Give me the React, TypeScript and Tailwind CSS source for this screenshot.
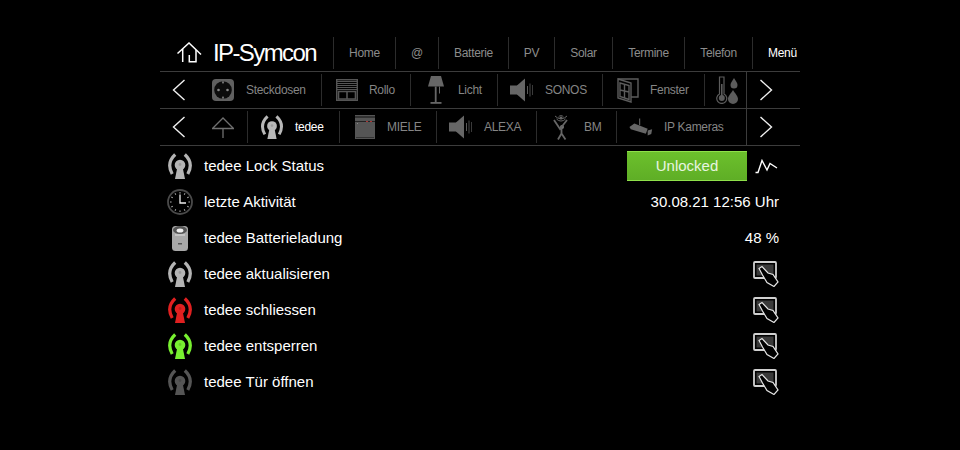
import type { ReactNode } from 'react'

const FONT = "font-['Liberation_Sans',Arial,sans-serif]"

function Chevron({ right = false }: { right?: boolean }) {
  return (
    <svg width="14" height="22" viewBox="0 0 14 22" fill="none" stroke="#f0f0f0" strokeWidth="1.4">
      <path d={right ? 'M1.5 1 L12.5 11 L1.5 21' : 'M12.5 1 L1.5 11 L12.5 21'} />
    </svg>
  )
}

function HomeIcon() {
  return (
    <svg width="25" height="21" viewBox="0 0 25 21" fill="none" stroke="#fff" strokeWidth="1.5">
      <path d="M0.5 11.5 L12 1 L24 12.5" />
      <path d="M5.7 7 V20" />
      <path d="M12.3 13 V19.7 H19 V8" />
    </svg>
  )
}

function TedeeIcon({ color }: { color: string }) {
  return (
    <svg width="26" height="28" viewBox="-1.2 0 26 28" fill="none">
      <path d="M7 2.5 Q-2.2 11 4 22" stroke={color} strokeWidth="3.2" />
      <path d="M16.6 2.5 Q25.8 11 19.6 22" stroke={color} strokeWidth="3.2" />
      <circle cx="11.8" cy="13" r="5.3" fill={color} />
      <path d="M9.2 15 L6.8 27 H16.8 L14.4 15 Z" fill={color} />
      <circle cx="11.8" cy="12.5" r="1.4" fill="#000" fillOpacity="0.15" />
    </svg>
  )
}

function SocketIcon() {
  return (
    <svg width="22" height="22" viewBox="0 0 22 22">
      <rect x="0" y="0" width="22" height="22" rx="4" fill="#606060" />
      <circle cx="11" cy="11" r="8.8" fill="#0c0c0c" />
      <circle cx="6.5" cy="11" r="1.3" fill="#888" />
      <circle cx="15.5" cy="11" r="1.3" fill="#888" />
      <rect x="10.2" y="2.4" width="1.6" height="2" fill="#888" />
      <rect x="10.2" y="17.6" width="1.6" height="2" fill="#888" />
    </svg>
  )
}

function RolloIcon() {
  return (
    <svg width="22" height="22" viewBox="0 0 22 22" fill="none" stroke="#555">
      <rect x="0.7" y="0.7" width="20.6" height="20.6" strokeWidth="1.4" />
      <path d="M1 2.5 H21 M1 4.5 H21 M1 6.5 H21 M1 8.5 H21 M1 10.5 H21" strokeWidth="1" />
      <path d="M2.5 12.5 H19.5 V20 H2.5 Z M11 12.5 V20" strokeWidth="1.6" />
    </svg>
  )
}

function LampIcon() {
  return (
    <svg width="16" height="28" viewBox="0 0 16 28" fill="#666">
      <path d="M3 0 H13 L16 10.5 H0 Z" />
      <rect x="6.8" y="10.5" width="1.8" height="16" />
      <rect x="11" y="10.5" width="1" height="7" />
      <rect x="2.5" y="26" width="11" height="1.8" />
    </svg>
  )
}

function SpeakerIcon() {
  return (
    <svg width="24" height="24" viewBox="0 0 24 24" fill="none">
      <rect x="0" y="7.5" width="8" height="9" fill="#666" />
      <path d="M7 7.5 L15 0.5 V23.5 L7 16.5 Z" fill="#666" />
      <path d="M17.5 8 V16" stroke="#5a5a5a" strokeWidth="1" />
      <path d="M20 5.5 V18.5" stroke="#4a4a4a" strokeWidth="1" />
      <path d="M22.5 7 V17" stroke="#3a3a3a" strokeWidth="1" />
    </svg>
  )
}

function WindowIcon() {
  return (
    <svg width="22" height="26" viewBox="0 0 22 26" fill="none" stroke="#5c5c5c" strokeWidth="1.4">
      <path d="M1 2 H21 V20 H14" />
      <path d="M1 2 L14 6 V25 L1 21 Z" />
      <path d="M3 6 L12 8.5 V22.5 L3 19.5 Z M7.5 7.5 V21 M3 13 L12 15" />
    </svg>
  )
}

function ClimateIcon() {
  return (
    <svg width="23" height="28" viewBox="0 0 23 28" fill="#5c5c5c">
      <path d="M3.5 1 H8 V18 A5 5 0 1 1 3.5 18 Z" fill="none" stroke="#5c5c5c" strokeWidth="1.2" />
      <circle cx="5.8" cy="22" r="3" />
      <rect x="5" y="8" width="1.6" height="12" />
      <path d="M18 2 C20 5.5 21.5 7 21.5 9 A3.5 3.5 0 0 1 14.5 9 C14.5 7 16 5.5 18 2 Z" />
      <path d="M17 14 C19.5 18 22 20 22 23 A5 5 0 0 1 12 23 C12 20 14.5 18 17 14 Z" />
    </svg>
  )
}

function UpIcon() {
  return (
    <svg width="22" height="21" viewBox="0 0 22 21" fill="none" stroke="#707070" strokeWidth="1.3">
      <path d="M0.5 11.5 L11 1 L21.5 11.5 Z" />
      <path d="M11 11.5 V21" />
    </svg>
  )
}

function MieleIcon() {
  return (
    <svg width="20" height="24" viewBox="0 0 20 24">
      <rect x="0" y="0" width="20" height="24" fill="#555" />
      <rect x="0" y="1.5" width="20" height="1" fill="#111" />
      <rect x="0" y="6" width="20" height="1" fill="#222" />
      <rect x="11" y="6" width="2" height="1" fill="#a33" />
      <rect x="15" y="6" width="2" height="1" fill="#a33" />
      <rect x="2" y="8" width="1" height="1" fill="#888" />
      <rect x="1" y="22" width="18" height="1" fill="#333" />
    </svg>
  )
}

function MotionIcon() {
  return (
    <svg width="18" height="26" viewBox="0 0 18 26" fill="none" stroke="#666">
      <path d="M6.5 3 A3 3 0 0 1 11.5 3 M4.5 5 A6 6 0 0 0 13.5 5 M3 2 A8 8 0 0 0 15 2" strokeWidth="1" />
      <circle cx="9" cy="4" r="1.5" fill="#666" stroke="none" />
      <circle cx="10" cy="13" r="2" fill="#777" stroke="none" />
      <path d="M2 6 L8 15 L15 6 M9.5 15 V19.5 L6 25.5 M9.5 19.5 L13.5 25.5" strokeWidth="1.8" />
    </svg>
  )
}

function CameraIcon() {
  return (
    <svg width="27" height="20" viewBox="0 0 27 20" fill="#666">
      <path d="M0.5 10 L6 6 L21 12 L19 17.5 L2 12.5 Z" />
      <path d="M12 0.5 V8" stroke="#666" strokeWidth="1.2" />
      <path d="M21 14 L26 12.5 L25 18 L21 19.5 Z" />
    </svg>
  )
}

function ClockIcon() {
  const ticks = [0, 30, 60, 90, 120, 150, 180, 210, 240, 270, 300, 330]
  return (
    <svg width="26" height="26" viewBox="0 0 26 26" fill="none">
      <circle cx="13" cy="13" r="12" stroke="#4a4a4a" strokeWidth="1.8" />
      {ticks.map((a) => (
        <rect key={a} x="12.5" y="3" width="1" height="1.6" fill="#aaa" transform={`rotate(${a} 13 13)`} />
      ))}
      <path d="M13 5.5 V14 H19" stroke="#eee" strokeWidth="1.3" />
    </svg>
  )
}

function BatteryIcon() {
  return (
    <svg width="16" height="26" viewBox="0 0 16 26">
      <rect x="0" y="1" width="16" height="25" rx="3.5" fill="#a8a8a8" />
      <ellipse cx="8" cy="5" rx="7" ry="4" fill="#555" />
      <ellipse cx="8" cy="5.5" rx="3.4" ry="2" fill="#eee" />
      <rect x="3" y="9.5" width="10" height="1" fill="#ddd" />
      <rect x="6" y="18" width="4" height="1.5" fill="#555" />
    </svg>
  )
}

function TouchIcon() {
  return (
    <svg width="26" height="26" viewBox="0 0 26 26" fill="none">
      <rect x="1" y="1" width="22" height="16" rx="1" stroke="#d0d0d0" strokeWidth="1.8" />
      <rect x="3.5" y="3.5" width="17" height="11" fill="#3a3a3a" />
      <path
        d="M6 7.5 L9 5.5 L15 12 L20 13.5 L25 21 L21 25.5 L14 21.5 L9.5 14 Z"
        fill="#000"
        stroke="#e5e5e5"
        strokeWidth="1.2"
      />
    </svg>
  )
}

function ChartIcon() {
  return (
    <svg width="23" height="15" viewBox="0 0 23 15" fill="none" stroke="#fff" strokeWidth="1.4">
      <path d="M0.5 13.5 L3 13.5 L7 1.5 L12 11 L15 4.5 L22 9" />
    </svg>
  )
}

function Sep({ children, className }: { children?: ReactNode; className: string }) {
  return <div className={`flex h-[32px] items-center border-l border-[#2c2c2c] ${className}`}>{children}</div>
}

function NavCell({
  icon,
  label,
  className,
  active = false,
  wide = false,
}: {
  icon: ReactNode
  label: string
  className: string
  active?: boolean
  wide?: boolean
}) {
  return (
    <Sep className={className}>
      <div className="flex w-[24px] shrink-0 items-center justify-center">{icon}</div>
      <span className={`text-[12px] tracking-[-0.3px] ${wide ? 'ml-[11px]' : 'ml-[10px]'} ${active ? 'text-white' : 'text-[#858585]'}`}>
        {label}
      </span>
    </Sep>
  )
}

function TopLink({ label, className }: { label: string; className: string }) {
  return (
    <Sep className={`justify-center text-[12px] tracking-[-0.3px] text-[#8c8c8c] ${className}`}>
      {label}
    </Sep>
  )
}

function ArrowEnd() {
  return (
    <div className="flex h-full w-[54px] items-center justify-center border-l border-[#3c3c3c] pr-[16px]">
      <Chevron right />
    </div>
  )
}

function ListRow({ icon, label, children }: { icon: ReactNode; label: string; children?: ReactNode }) {
  return (
    <div className="flex h-[36px] items-center text-[15px] text-white">
      <div className="flex w-[44px] shrink-0 items-center justify-center pr-[4px]">{icon}</div>
      <span>{label}</span>
      <div className="ml-auto flex items-center pr-[21px]">{children}</div>
    </div>
  )
}

export default function App() {
  return (
    <div className={`min-h-screen w-full bg-black ${FONT}`}>
      <div className="mx-auto w-[640px] pt-[34px]">
        {/* Top bar */}
        <div className="flex h-[38px] items-center border-b border-[#3c3c3c]">
          <div className="flex w-[173px] items-center pl-[17px]">
            <HomeIcon />
            <span className="ml-[11px] text-[24px] tracking-[-1.6px] text-white">IP-Symcon</span>
          </div>
          <TopLink label="Home" className="w-[62px]" />
          <TopLink label="@" className="w-[43px]" />
          <TopLink label="Batterie" className="w-[70px]" />
          <TopLink label="PV" className="w-[46px]" />
          <TopLink label="Solar" className="w-[58px]" />
          <TopLink label="Termine" className="w-[72px]" />
          <TopLink label="Telefon" className="w-[68px]" />
          <Sep className="w-[48px] pl-[15px] text-[12px] tracking-[-0.3px] text-white">Menü</Sep>
        </div>

        {/* Second row */}
        <div className="flex h-[37px] items-center border-b border-[#3c3c3c]">
          <div className="flex w-[52px] items-center pl-[12px]">
            <Chevron />
          </div>
          <div className="flex w-[109px] items-center">
            <SocketIcon />
            <span className="ml-[12px] text-[12px] tracking-[-0.3px] text-[#858585]">Steckdosen</span>
          </div>
          <NavCell icon={<RolloIcon />} label="Rollo" className="w-[89px] pl-[13px]" />
          <NavCell icon={<LampIcon />} label="Licht" className="w-[87px] pl-[13px]" />
          <NavCell icon={<SpeakerIcon />} label="SONOS" wide className="w-[105px] pl-[12px]" />
          <NavCell icon={<WindowIcon />} label="Fenster" className="w-[102px] pl-[13px]" />
          <Sep className="w-[42px] pl-[11px]"><ClimateIcon /></Sep>
          <ArrowEnd />
        </div>

        {/* Third row */}
        <div className="flex h-[37px] items-center border-b border-[#3c3c3c]">
          <div className="flex w-[52px] items-center pl-[12px]">
            <Chevron />
          </div>
          <div className="flex w-[35px] items-center">
            <UpIcon />
          </div>
          <NavCell icon={<TedeeIcon color="#b8b8b8" />} label="tedee" active wide className="w-[92px] pl-[12px]" />
          <NavCell icon={<MieleIcon />} label="MIELE" className="w-[97px] pl-[13px]" />
          <NavCell icon={<SpeakerIcon />} label="ALEXA" wide className="w-[100px] pl-[12px]" />
          <NavCell icon={<MotionIcon />} label="BM" wide className="w-[80px] pl-[12px]" />
          <NavCell icon={<CameraIcon />} label="IP Kameras" wide className="w-[130px] pl-[12px]" />
          <ArrowEnd />
        </div>

        {/* Values */}
        <div className="pt-[2px]">
          <ListRow icon={<TedeeIcon color="#b4b4b4" />} label="tedee Lock Status">
            <div className="-mr-[21px] flex items-center">
              <div className="flex h-[30px] w-[120px] items-center justify-center border-t border-b border-[#8fe04a] bg-gradient-to-b from-[#6cc02c] to-[#5fae26] text-[#e8f5e0]">
                Unlocked
              </div>
              <div className="flex w-[53px] justify-start pl-[8px]">
                <ChartIcon />
              </div>
            </div>
          </ListRow>
          <ListRow icon={<ClockIcon />} label="letzte Aktivität">30.08.21 12:56 Uhr</ListRow>
          <ListRow icon={<BatteryIcon />} label="tedee Batterieladung">48 %</ListRow>
          <ListRow icon={<TedeeIcon color="#b4b4b4" />} label="tedee aktualisieren"><TouchIcon /></ListRow>
          <ListRow icon={<TedeeIcon color="#e02020" />} label="tedee schliessen"><TouchIcon /></ListRow>
          <ListRow icon={<TedeeIcon color="#78f030" />} label="tedee entsperren"><TouchIcon /></ListRow>
          <ListRow icon={<TedeeIcon color="#555555" />} label="tedee Tür öffnen"><TouchIcon /></ListRow>
        </div>
      </div>
    </div>
  )
}
